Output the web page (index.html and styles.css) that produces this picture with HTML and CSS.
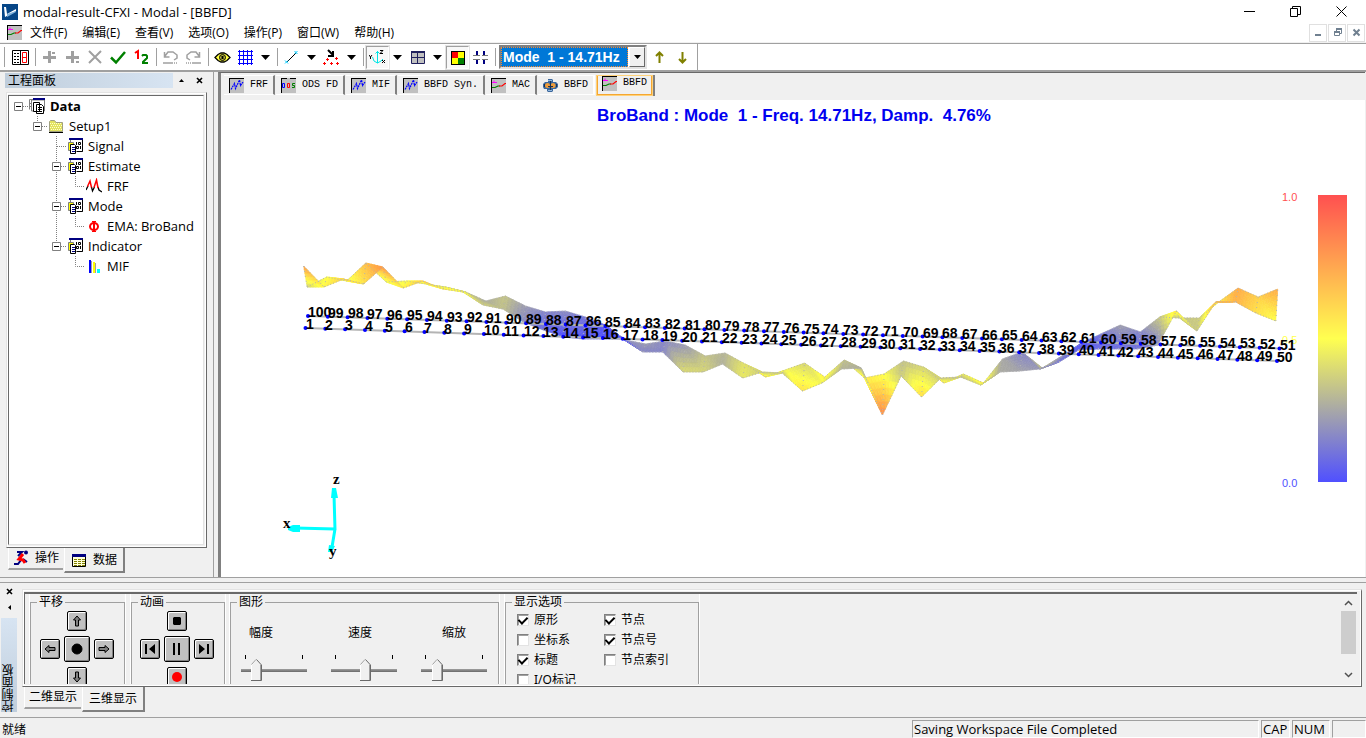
FILE: index.html
```html
<!DOCTYPE html>
<html lang="zh-CN">
<head>
<meta charset="utf-8">
<title>modal-result-CFXI - Modal - [BBFD]</title>
<link rel="stylesheet" href="styles.css">
</head>
<body>
<svg class="defs" aria-hidden="true">
  <defs>
    <symbol id="g-wave" viewBox="0 0 15 15"><path fill="#c0c0c0" d="M0 0h15v15H0z"/><path fill="none" stroke="#000" d="M0 .5h15M.5 0v15"/><path fill="none" stroke="#00f" stroke-width="1.2" stroke-dasharray="2 .7" d="M2 11.500L5.500 5.500l1 5L10.500 2l1 5.500L14 4"/></symbol>
    <symbol id="g-ods" viewBox="0 0 15 15"><path fill="#c0c0c0" d="M0 0h15v15H0z"/><path fill="none" stroke="#000" d="M0 .5h6m3 0h6M.5 0v15"/><path fill="none" stroke="#00f" d="M1.500 5.500h2v4h-2z"/><path fill="none" stroke="#f00" d="M6.500 5.500v4h2v-4z"/><path fill="none" stroke="#008000" d="M14 5.500h-2.500v2h2v2H11"/></symbol>
    <symbol id="g-mac" viewBox="0 0 15 15"><path fill="#c0c0c0" d="M0 0h15v15H0z"/><path fill="none" stroke="#000" d="M0 .5h15M.5 0v15"/><path fill="none" stroke="#f0f" d="M1 4.500h2v-2M3 4.500h3"/><path fill="none" stroke="#008000" stroke-width="1.200" d="M1 9.500h3l3-1.500h2"/><path fill="none" stroke="#f00" stroke-width="1.200" d="M8 8h3l3-2.500h1"/></symbol>
    <symbol id="g-ball" viewBox="0 0 15 15"><path fill="#3a679c" d="M5 1h4l1 1v2l3 0 2 2v3l-2 2-3 0v2l-1 1-4 0-1-1v-2l-3 0L0 9V6l2-2 3 0z"/><circle cx="4.500" cy="7.500" r="2.500" fill="#ef9b38"/><circle cx="10" cy="7.500" r="2.500" fill="#ef9b38"/><path stroke="#173258" d="M7.500 3v9M1.500 6v3M13.500 6v3M5 8.500h5"/><path stroke="#91b6dd" d="M5 2.500h4M5 12.500h4"/></symbol>
    <symbol id="g-set" viewBox="0 0 16 16"><path fill="#fff" stroke="#808080" d="M3.500 1.500h12v12h-12z"/><path fill="#000080" d="M2 0h14v2H2z"/><path fill="none" stroke="#000" d="M15.500 2v11.500H10"/><path fill="none" stroke="#000" d="M9.500 4v3M11.500 4.500h2v2h-2zM9.500 8.500h2v2h-2zM13.500 8v3"/><path fill="#ff0" stroke="#808080" d="M1.500 4.500h5v3h-3v5h-2z"/><path fill="#fff" stroke="#000" d="M3.500 6.500h4l1 1v8h-5z"/><path stroke="#000080" d="M5 9.500h3M5 11.500h3M5 13.500h3"/></symbol>
    <symbol id="g-data" viewBox="0 0 16 16"><path fill="#fff" stroke="#808080" d="M.5 11.500v-10h8"/><path fill="#fff" stroke="#808080" d="M2.500 13v-11h13v11z"/><path fill="#000080" d="M4 0h12v2H4z"/><path stroke="#808080" d="M1 5.500h2M1 8.500h2"/><path fill="#fff" stroke="#000" d="M4.500 4.500h6v9h-6zM7.500 6.500h5l2 2v7h-7z"/><path stroke="#000" d="M9 9.500h4M9 11.500h4M9 13.500h4"/></symbol>
    <symbol id="g-folder" viewBox="0 0 16 16"><path fill="#e2e260" stroke="#a0a080" d="M1.500 13.500V3.500l1-1h4l1.500 2h6.500v9z"/><path fill="none" stroke="#ffc" stroke-dasharray="1 1" d="M2 5.500h12M3 7.500h12M2 9.500h12M3 11.500h11"/><path stroke="#000" d="M1 14.500h14"/></symbol>
    <symbol id="g-frf" viewBox="0 0 16 16"><path fill="none" stroke="#000" stroke-width="1.300" d="M0 12l2-4M5.500 9l1 4 2-4M12 9l1 3 3 2"/><path fill="none" stroke="#f00" stroke-width="1.500" d="M1.500 8.500L4 3l1.500 6.500M8 9.500L10.500 2l1.500 8"/></symbol>
    <symbol id="g-phi" viewBox="0 0 16 16"><ellipse cx="8" cy="8.500" rx="4" ry="3.500" fill="none" stroke="#f00" stroke-width="2"/><path stroke="#f00" stroke-width="2" d="M8 3v11"/><path stroke="#f00" d="M6 3.500h4M6 13.500h4"/></symbol>
    <symbol id="g-mif" viewBox="0 0 16 16"><path fill="#00f" d="M3 2h2v13H3z"/><path fill="#ff0" d="M7 4h2v11H7z"/><path fill="#0ff" d="M11 11h3v4h-3z"/><path stroke="#a0a0a0" d="M5.500 3v12M9.500 5v10"/></symbol>
    <symbol id="l-box" viewBox="0 0 19 20"><path fill="none" stroke="#808080" stroke-dasharray="1 1" d="M14 10.500h5"/><path fill="#fff" stroke="#808080" d="M5.500 6.500h8v8h-8z"/><path stroke="#000" d="M7 10.500h5"/></symbol>
    <symbol id="l-v" viewBox="0 0 19 20"><path stroke="#808080" stroke-dasharray="1 1" d="M9.500 0v20"/></symbol>
    <symbol id="l-up" viewBox="0 0 19 20"><path stroke="#808080" stroke-dasharray="1 1" d="M9.500 0v6"/></symbol>
    <symbol id="l-tee" viewBox="0 0 19 20"><path fill="none" stroke="#808080" stroke-dasharray="1 1" d="M9.500 0v20M10 10.500h9"/></symbol>
    <symbol id="l-end" viewBox="0 0 19 20"><path fill="none" stroke="#808080" stroke-dasharray="1 1" d="M9.500 0v10.500h10"/></symbol>
    <symbol id="a-down" viewBox="0 0 9 5"><path d="M0 0h9L4.500 5z"/></symbol>
  </defs>
</svg>

<header class="titlebar">
  <svg class="logo" viewBox="0 0 16 16"><path fill="#064687" d="M0 0h16v16H0z"/><path fill="#fff" d="M2 3h2l1 7 9-5v2L3 13z"/><path fill="#7fb1dc" d="M5 10l9-3v1L5 13z"/></svg>
  <h1 class="caption">modal-result-CFXI - Modal - [BBFD]</h1>
  <div class="window-buttons">
    <button aria-label="最小化"><svg viewBox="0 0 11 11"><path stroke="#000" d="M0 5.500h11"/></svg></button>
    <button aria-label="还原"><svg viewBox="0 0 11 11"><path fill="none" stroke="#000" d="M.5 2.500h7v8h-7zM2.500 2.500v-2h8v8h-3"/></svg></button>
    <button aria-label="关闭"><svg viewBox="0 0 11 11"><path stroke="#000" d="M.5.500l10 10M10.500.500l-10 10"/></svg></button>
  </div>
</header>

<nav class="menubar">
  <svg class="doc-icon"><use href="#g-mac"/></svg>
  <button>文件(F)</button><button>编辑(E)</button><button>查看(V)</button><button>选项(O)</button><button>操作(P)</button><button>窗口(W)</button><button>帮助(H)</button>
  <div class="mdi-buttons">
    <button aria-label="最小化文档"><svg viewBox="0 0 9 9"><path stroke="#708090" stroke-width="2" d="M1 7h6"/></svg></button>
    <button aria-label="还原文档"><svg viewBox="0 0 9 9"><path fill="none" stroke="#708090" d="M1.500 4.500h5v3h-5zM3.500 3V1.500h5v4H7"/><path stroke="#708090" stroke-width="2" d="M1 4h6M3 1h6"/></svg></button>
    <button aria-label="关闭文档"><svg viewBox="0 0 9 9"><path stroke="#708090" stroke-width="2" d="M1.500 1.500l6 6M7.500 1.500l-6 6"/></svg></button>
  </div>
</nav>

<div class="toolbar-row">
<div class="toolbar" role="toolbar">
  <span class="grip"></span>
  <button class="tool" aria-label="报告"><svg viewBox="0 0 17 17"><path fill="#fff" stroke="#000" d="M.5 1.500h16v14H.5z"/><path stroke="#000" d="M8.500 1v15M2 4.500h2M5 4.500h2M2 7.500h2M5 7.500h2M2 10.500h2M5 10.500h2M2 13.500h2M5 13.500h2"/><path fill="none" stroke="#f00" d="M10.500 3.500h4v10h-4zM10 8.500h5"/></svg></button>
  <i class="sep"></i>
  <button class="tool" aria-label="添加"><svg viewBox="0 0 17 17"><path stroke="#a0a0a0" stroke-width="3" d="M8.500 2v12M2 8.500h13"/><path fill="#a0a0a0" d="M11 3h3v2h-3z"/></svg></button>
  <button class="tool" aria-label="插入"><svg viewBox="0 0 17 17"><path stroke="#a0a0a0" stroke-width="3" d="M8.500 2v12M2 8.500h13"/><path fill="#a0a0a0" d="M12 12h3v2h-3z"/></svg></button>
  <button class="tool" aria-label="删除"><svg viewBox="0 0 17 17"><path stroke="#a0a0a0" stroke-width="2" d="M2 2l12 12M14 2L2 14"/></svg></button>
  <button class="tool" aria-label="确认"><svg viewBox="0 0 17 17"><path fill="none" stroke="#008000" stroke-width="2.500" d="M1 8.500l5 5L15 3"/></svg></button>
  <button class="tool" aria-label="编号"><svg viewBox="0 0 17 17"><path fill="none" stroke="#f00" stroke-width="2" d="M2 4l3-2v8"/><path fill="none" stroke="#008000" stroke-width="2" d="M9 7l1-1h3l1 1v2l-4 4v1h5"/></svg></button>
  <i class="sep"></i>
  <button class="tool" aria-label="撤销"><svg viewBox="0 0 17 17"><path fill="none" stroke="#a0a0a0" stroke-width="1.500" d="M2.500 3v5h5M3 7l3-4h5l4 3v3l-3 2M1 14h9"/><path stroke="#a0a0a0" stroke-width="1.500" stroke-dasharray="1 1" d="M10 14h6"/></svg></button>
  <button class="tool" aria-label="重做"><svg viewBox="0 0 17 17"><path fill="none" stroke="#a0a0a0" stroke-width="1.500" d="M14.500 3v5h-5M14 7l-3-4H6L2 6v3l3 2M7 14h9"/><path stroke="#a0a0a0" stroke-width="1.500" stroke-dasharray="1 1" d="M1 14h6"/></svg></button>
  <i class="sep"></i>
  <button class="tool" aria-label="显示"><svg viewBox="0 0 17 17"><path fill="#ffff40" stroke="#000" stroke-width="1.300" d="M1 8.500l3-3 3-1.500h3l3 1.500 3 3-3 3-3 1.500H7l-3-1.500z"/><circle cx="8.500" cy="8.500" r="3" fill="#b8b840" stroke="#000"/><path fill="#000" d="M7.500 7h2v3h-2z"/></svg></button>
  <button class="tool" aria-label="网格"><svg viewBox="0 0 17 17"><path stroke="#00f" d="M2.500 1v15M6.500 1v15M10.500 1v15M14.500 1v15M1 2.500h15M1 6.500h15M1 10.500h15M1 14.500h15"/></svg></button>
  <button class="drop" aria-label="网格选项"><svg><use href="#a-down"/></svg></button>
  <i class="sep"></i>
  <button class="tool" aria-label="画线"><svg viewBox="0 0 17 17"><path stroke="#000" d="M4 13l9-9"/><path stroke="#0cf" d="M2 11.500l3 3M2 14.500l3-3M11.500 2l3 3M14.500 2l-3 3"/></svg></button>
  <button class="drop" aria-label="画线选项"><svg><use href="#a-down"/></svg></button>
  <button class="tool" aria-label="节点"><svg viewBox="0 0 17 17"><path fill="none" stroke="#000" stroke-width="2" d="M5 1l5 5M10 2v5H5"/><path fill="none" stroke="#f00" d="M4.500 9v3M3 10.500h3M13.500 8v3M12 9.500h3M1.500 13v3M0 14.500h3M8.500 13v3M7 14.500h3M14.500 13v3M13 14.500h3"/></svg></button>
  <button class="drop" aria-label="节点选项"><svg><use href="#a-down"/></svg></button>
  <i class="sep"></i>
  <button class="tool pressed" aria-label="坐标轴"><svg viewBox="0 0 17 17"><path fill="none" stroke="#00e5e5" d="M8.500 2v12M6.500 4.500l2-2 2 2M3.500 8l1.500 4 3.500 2 3.500-2 2-2"/><path fill="none" stroke="#000" d="M11 1.500h3l-3 3h3M0 6l1.500 2L3 6M1.500 8v2M13 11l3 3M16 11l-3 3"/></svg></button>
  <button class="drop" aria-label="坐标轴选项"><svg><use href="#a-down"/></svg></button>
  <button class="tool" aria-label="视图"><svg viewBox="0 0 17 17"><path fill="#c0c0c0" stroke="#20205c" d="M2.500 2.500h13v12h-13z"/><path fill="#20205c" d="M2 2h14v2H2z"/><path stroke="#20205c" d="M8.500 3v12M2 8.500h14"/></svg></button>
  <button class="drop" aria-label="视图选项"><svg><use href="#a-down"/></svg></button>
  <button class="tool pressed" aria-label="配色"><svg viewBox="0 0 17 17"><path d="M2 2h14v14H2z"/><path fill="#f00" d="M3 3h6v6H3z"/><path fill="#ff0" d="M9 3h6v6H9zM3 9h6v6H3z"/><path fill="#008000" d="M9 9h6v6H9z"/></svg></button>
  <button class="tool" aria-label="分割"><svg viewBox="0 0 17 17"><path stroke="#000080" stroke-width="2" d="M5 2v4M12 2v4M5 11v4M12 11v4"/><path stroke="#777" d="M1 6.500h7M10 6.500h6M1 10.500h7M10 10.500h6"/></svg></button>
  <i class="sep"></i>
  <span class="combo"><select aria-label="模态"><option>Mode&nbsp;&nbsp;1 - 14.71Hz</option></select><span class="combo-arrow"><svg viewBox="0 0 9 5"><path d="M1 0h7L4.500 4z"/></svg></span></span>
  <button class="tool" aria-label="上一阶"><svg viewBox="0 0 17 17"><path fill="none" stroke="#808000" stroke-width="2" d="M8.500 14V3M5 7l3.500-3.500L12 7"/></svg></button>
  <button class="tool" aria-label="下一阶"><svg viewBox="0 0 17 17"><path fill="none" stroke="#808000" stroke-width="2" d="M8.500 3v11M5 10l3.500 3.500L12 10"/></svg></button>
</div>
</div>

<main class="workspace">
  <aside class="project">
    <div class="dock-head">
      <h2>工程面板</h2>
      <button aria-label="折叠"><svg viewBox="0 0 7 7"><path d="M1 5h5L3.500 2z"/></svg></button>
      <button aria-label="关闭面板"><svg viewBox="0 0 7 7"><path stroke="#000" stroke-width="1.600" d="M1 1l5 5M6 1L1 6"/></svg></button>
    </div>
    <div class="frame tree-frame">
      <ul class="tree" role="tree">
        <li><svg class="cell"><use href="#l-box"/></svg><svg class="ico"><use href="#g-data"/></svg><b>Data</b></li>
        <li><i class="cell"></i><svg class="cell"><use href="#l-up"/><use href="#l-box"/></svg><svg class="ico"><use href="#g-folder"/></svg>Setup1</li>
        <li><i class="cell"></i><i class="cell"></i><svg class="cell"><use href="#l-tee"/></svg><svg class="ico"><use href="#g-set"/></svg>Signal</li>
        <li><i class="cell"></i><i class="cell"></i><svg class="cell"><use href="#l-v"/><use href="#l-box"/></svg><svg class="ico"><use href="#g-set"/></svg>Estimate</li>
        <li><i class="cell"></i><i class="cell"></i><svg class="cell"><use href="#l-v"/></svg><svg class="cell"><use href="#l-end"/></svg><svg class="ico"><use href="#g-frf"/></svg>FRF</li>
        <li><i class="cell"></i><i class="cell"></i><svg class="cell"><use href="#l-v"/><use href="#l-box"/></svg><svg class="ico"><use href="#g-set"/></svg>Mode</li>
        <li><i class="cell"></i><i class="cell"></i><svg class="cell"><use href="#l-v"/></svg><svg class="cell"><use href="#l-end"/></svg><svg class="ico"><use href="#g-phi"/></svg>EMA: BroBand</li>
        <li><i class="cell"></i><i class="cell"></i><svg class="cell"><use href="#l-up"/><use href="#l-box"/></svg><svg class="ico"><use href="#g-set"/></svg>Indicator</li>
        <li><i class="cell"></i><i class="cell"></i><i class="cell"></i><svg class="cell"><use href="#l-end"/></svg><svg class="ico"><use href="#g-mif"/></svg>MIF</li>
      </ul>
    </div>
    <div class="sheet-tabs">
      <button><svg viewBox="0 0 16 16"><path fill="none" stroke="#000080" stroke-width="2" d="M4 2h5l-4 4M1 14h4l3-4M10 9l4 3"/><path fill="none" stroke="#f00" stroke-width="3" d="M10 4L6 9l4 1 2 3"/><circle cx="13" cy="2.500" r="2" fill="#000080"/></svg>操作</button>
      <button class="active"><svg viewBox="0 0 16 16"><path fill="#ffffd8" stroke="#000" d="M1.500 2.500h13v12h-13z"/><path fill="#000080" d="M1 2h14v3H1z"/><path stroke="#808000" stroke-dasharray="3 1" d="M3 7.500h11M3 9.500h11M3 11.500h11M3 13.500h11"/></svg>数据</button>
    </div>
  </aside>

  <section class="document">
    <div class="view-tabs" role="tablist">
      <button role="tab"><svg><use href="#g-wave"/></svg>FRF</button>
      <button role="tab"><svg><use href="#g-ods"/></svg>ODS FD</button>
      <button role="tab"><svg><use href="#g-wave"/></svg>MIF</button>
      <button role="tab"><svg><use href="#g-wave"/></svg>BBFD Syn.</button>
      <button role="tab"><svg><use href="#g-mac"/></svg>MAC</button>
      <button role="tab" class="plain"><svg><use href="#g-ball"/></svg>BBFD</button>
      <button role="tab" class="active"><svg><use href="#g-mac"/></svg>BBFD</button>
    </div>
    <svg class="plot" viewBox="221 100 1144 477" preserveAspectRatio="xMinYMin meet">
      <defs><linearGradient id="scale" x1="0" y1="0" x2="0" y2="1"><stop offset="0" stop-color="#ff5050"/><stop offset=".5" stop-color="#ffff50"/><stop offset="1" stop-color="#5050ff"/></linearGradient></defs>
      <text class="plot-title" x="597" y="121">BroBand : Mode&#160; 1 - Freq. 14.71Hz, Damp.&#160; 4.76%</text>
      <g id="surface"></g>
      <text class="scale-label" x="1282" y="344" fill="#ffff50">0.5</text>
      <g id="nodes"></g>
      <rect x="1318" y="195" width="29" height="287" fill="url(#scale)"/>
      <text class="scale-label" x="1282" y="201" fill="#ff5050">1.0</text>
      <text class="scale-label" x="1282" y="487" fill="#5050ff">0.0</text>
      <g stroke="#0ff" stroke-width="3" fill="#0ff"><path d="M335 530l-1-36M335 529l-40-1M335 529l-3 18"/><path stroke="none" d="M332 488h4l2 10h-7zM288 527l5-2 7 0v7l-7 0-5-2zM329 545l6 1-3 6h-4z"/></g>
      <text class="axis" x="333" y="484">z</text><text class="axis" x="283" y="528">x</text><text class="axis" x="329" y="556">y</text>
    </svg>
  </section>
</main>

<section class="control">
  <div class="control-side">
    <button aria-label="关闭控制面板"><svg viewBox="0 0 7 7"><path stroke="#000" stroke-width="1.600" d="M1 1l5 5M6 1L1 6"/></svg></button>
    <button aria-label="折叠控制面板"><svg viewBox="0 0 7 7"><path d="M5 1v5L2 3.500z"/></svg></button>
    <h2>控制面板</h2>
  </div>
  <div class="control-body">
    <div class="frame control-frame">
      <div class="groups">
        <fieldset class="g-pan"><legend>平移</legend>
          <div class="pad">
            <button class="up" aria-label="上移"><svg viewBox="0 0 12 12"><path d="M6 1l3.500 4H7.500v6h-3V5h-2z"/></svg></button>
            <button class="left" aria-label="左移"><svg viewBox="0 0 12 12"><path d="M1 6l4-3.500v2h6v3H5v2z"/></svg></button>
            <button class="mid" aria-label="居中"><svg viewBox="0 0 12 12"><circle cx="6" cy="6" r="5" fill="#000"/></svg></button>
            <button class="right" aria-label="右移"><svg viewBox="0 0 12 12"><path d="M11 6L7 2.500v2H1v3h6v2z"/></svg></button>
            <button class="down" aria-label="下移"><svg viewBox="0 0 12 12"><path d="M6 11L2.500 7h2V1h3v6h2z"/></svg></button>
          </div>
        </fieldset>
        <fieldset class="g-anim"><legend>动画</legend>
          <div class="pad">
            <button class="up" aria-label="停止"><svg viewBox="0 0 12 12"><path fill="#000" d="M3 2h6l1 1v6l-1 1H3L2 9V3z"/></svg></button>
            <button class="left" aria-label="上一帧"><svg viewBox="0 0 12 12"><path fill="#000" d="M1 1h2v10H1zM11 1v10L5 6z"/></svg></button>
            <button class="mid" aria-label="暂停"><svg viewBox="0 0 12 12"><path fill="#000" d="M2 0h2v12H2zM7 0h2v12H7z"/></svg></button>
            <button class="right" aria-label="下一帧"><svg viewBox="0 0 12 12"><path fill="#000" d="M9 1h2v10H9zM1 1v10l6-5z"/></svg></button>
            <button class="down" aria-label="录制"><svg viewBox="0 0 12 12"><circle cx="6" cy="6" r="5" fill="#f00"/></svg></button>
          </div>
        </fieldset>
        <fieldset class="g-shape"><legend>图形</legend>
          <div class="sliders">
            <label class="s-amp"><span>幅度</span><i class="ticks"></i><input type="range" value="19"></label>
            <label class="s-speed"><span>速度</span><i class="ticks"></i><input type="range" value="53"></label>
            <label class="s-zoom"><span>缩放</span><i class="ticks"></i><input type="range" value="20"></label>
          </div>
        </fieldset>
        <fieldset class="g-show"><legend>显示选项</legend>
          <div class="checks">
            <label><input type="checkbox" checked>原形</label><label><input type="checkbox" checked>节点</label>
            <label><input type="checkbox">坐标系</label><label><input type="checkbox" checked>节点号</label>
            <label><input type="checkbox" checked>标题</label><label><input type="checkbox">节点索引</label>
            <label><input type="checkbox">I/O标记</label>
          </div>
        </fieldset>
      </div>
      <div class="scrollbar">
        <button aria-label="向上滚动"><svg viewBox="0 0 9 6"><path fill="none" stroke="#505050" stroke-width="1.500" d="M1 5l3.500-3.500L8 5"/></svg></button>
        <span class="thumb"></span>
        <button aria-label="向下滚动"><svg viewBox="0 0 9 6"><path fill="none" stroke="#505050" stroke-width="1.500" d="M1 1l3.500 3.500L8 1"/></svg></button>
      </div>
    </div>
    <div class="sheet-tabs">
      <button>二维显示</button>
      <button class="active">三维显示</button>
    </div>
  </div>
</section>

<footer class="statusbar">
  <span class="ready">就绪</span>
  <span class="pane message">Saving Workspace File Completed</span>
  <span class="pane cap">CAP</span>
  <span class="pane num">NUM</span>
  <span class="pane blank"></span>
</footer>
<script src="plot.js"></script>
</body>
</html>
```
FILE: styles.css
```css
* { box-sizing: border-box; }
body {
  margin: 0;
  height: 100vh;
  display: flex;
  flex-direction: column;
  overflow: hidden;
  background: #f0f0f0;
  color: #000;
  font: 12px/16px "Noto Sans", "Noto Sans CJK SC", sans-serif;
}
button {
  display: flex;
  align-items: center;
  justify-content: center;
  margin: 0;
  padding: 0;
  border: 0;
  background: none;
  color: inherit;
  font: inherit;
  white-space: nowrap;
}
h1, h2 { margin: 0; font-size: 12px; font-weight: 400; }
svg { display: block; flex: none; }
.defs { position: absolute; width: 0; height: 0; }

.titlebar { display: flex; align-items: center; height: 23px; padding-left: 2px; background: #fff; flex: none; }
.logo { width: 16px; height: 16px; }
.caption { flex: 1; padding-left: 5px; font: 13px/20px "Open Sans", "Noto Sans CJK SC", sans-serif; }
.window-buttons { display: flex; padding-right: 2px; }
.window-buttons button { width: 46px; height: 21px; }
.window-buttons svg { width: 11px; height: 11px; }

.menubar { display: flex; align-items: center; gap: 15px; height: 19px; padding-left: 7px; background: #fff; flex: none; font-family: "Open Sans", "Noto Sans CJK SC", sans-serif; }
.doc-icon { width: 15px; height: 15px; margin-right: -7px; }
.mdi-buttons { display: flex; gap: 1px; margin-left: auto; padding-right: 1px; }
.mdi-buttons button { width: 18px; height: 18px; border: 1px solid #e0e0e0; }
.mdi-buttons svg { width: 9px; height: 9px; }

.toolbar-row { background: #fff; border-top: 1px solid #a0a0a0; border-bottom: 2px solid #a0a0a0; flex: none; margin-top: 1px; }
.toolbar { display: flex; align-items: center; width: max-content; height: 26px; padding-right: 3px; border-right: 1px solid #a0a0a0; }
.grip { width: 2px; height: 20px; margin: 0 4px 0 3px; border-right: 1px solid #a0a0a0; }
.tool { width: 23px; height: 23px; }
.tool svg { width: 17px; height: 17px; }
.tool.pressed { border: 1px solid #fff; border-top-color: #a0a0a0; border-left-color: #a0a0a0; outline: 1px solid #e3e3e3; background: #f8f8f8; }
.drop { width: 17px; height: 23px; }
.drop svg { width: 9px; height: 5px; }
.sep { width: 1px; height: 18px; margin: 0 2px 0 3px; background: #a0a0a0; }
.combo { display: flex; width: 148px; height: 24px; margin: 0 1px; border: 2px solid; border-color: #808080 #e3e3e3 #e3e3e3 #808080; background: #fff; }
.combo select { flex: 1; min-width: 0; margin: 0 1px 0 0; padding: 0 0 0 1px; appearance: none; border: 1px dotted #ff8728; border-radius: 0; background: #0078d7; color: #fff; font: bold 14px/18px "Liberation Sans", Arial, sans-serif; }
.combo-arrow { display: flex; align-items: center; justify-content: center; width: 16px; border: 1px solid; border-color: #fff #696969 #696969 #fff; background: #f0f0f0; }
.combo-arrow svg { width: 9px; height: 5px; }

.workspace { display: flex; flex: 1; min-height: 0; border-bottom: 1px solid #a0a0a0; }
.project { display: flex; flex-direction: column; width: 214px; padding: 1px 6px 4px 5px; border-right: 1px solid #a0a0a0; flex: none; }
.dock-head { display: flex; align-items: center; height: 19px; padding-bottom: 4px; }
.dock-head h2 { flex: 1; padding-left: 3px; line-height: 15px; background: linear-gradient(90deg, #bfcddb, #d7e4f2); }
.dock-head button { width: 17px; height: 15px; }
.dock-head button + button { padding-left: 1px; }
.dock-head svg, .control-side svg { width: 7px; height: 7px; }
.frame { border: 2px solid; border-color: #e3e3e3 #696969 #696969 #e3e3e3; outline: 1px solid #fff; outline-offset: -2px; }
.tree-frame { flex: 1; display: flex; margin-left: 1px; padding: 1px 1px 1px 0; }
.tree { flex: 1; margin: 0; padding: 0; list-style: none; background: #fff; border: 1px solid; border-color: #696969 #e3e3e3 #e3e3e3 #696969; font: 13px/20px "Open Sans", sans-serif; }
.tree li { display: flex; align-items: center; height: 20px; }
.tree b { font-weight: 700; }
.cell { width: 19px; height: 20px; flex: none; }
.ico { width: 16px; height: 16px; margin: 0 5px 0 1px; }

.sheet-tabs { display: flex; align-items: flex-start; height: 25px; padding-left: 2px; gap: 1px; }
.sheet-tabs button { height: 22px; padding: 0 4px; gap: 6px; border: solid; border-width: 0 0 2px 1px; border-color: #fff #fff #a0a0a0 #fff; }
.sheet-tabs .active { height: 25px; padding: 0 6px; border-width: 0 2px 2px 1px; border-color: #fff #808080 #808080 #fff; }
.sheet-tabs svg { width: 16px; height: 16px; }
.project .sheet-tabs { padding-left: 3px; }

.document { flex: 1; min-width: 0; display: flex; flex-direction: column; margin: 0 1px 0 4px; border-left: 3px solid #808080; border-top: 1px solid #696969; background: #fff; }
.view-tabs { display: flex; align-items: flex-start; gap: 1px; height: 27px; padding: 2px 0 0 3px; background: #f0f0f0; font: 10px/18px "Liberation Mono", monospace; flex: none; }
.view-tabs button { height: 20px; padding: 0 5px; gap: 6px; border-right: 2px solid #808080; border-bottom: 1px solid #fff; border-top: 1px solid #fff; }
.view-tabs svg { width: 15px; height: 15px; }
.view-tabs .plain { border-right-color: #fff; }
.view-tabs .active { height: 21px; padding: 0 4px 3px; border: 2px solid #f5a732; border-top: 0; outline: 1px solid #ffd27a; outline-offset: -1px; box-shadow: 2px 0 #808080; }
.plot { width: 100%; height: auto; min-height: 0; font-family: "Liberation Sans", Arial, sans-serif; }
.plot-title { font-size: 17px; font-weight: 700; fill: #0000f0; }
.scale-label { font-size: 11px; }
.axis { font: bold 15px "Liberation Serif", serif; }
.node-label { font-size: 14px; font-weight: 700; }

.control { display: flex; margin-top: 4px; border-top: 1px solid #a0a0a0; flex: none; height: 135px; }
.control-side { display: flex; flex-direction: column; width: 17px; padding: 0 0 5px 1px; flex: none; }
.control-side button { width: 16px; height: 16px; }
.control-side h2 { flex: 1; margin-top: 3px; writing-mode: vertical-rl; transform: rotate(180deg); background: linear-gradient(0deg, #d7e4f2, #bfcddb); }
.control-body { flex: 1; min-width: 0; display: flex; flex-direction: column; padding: 6px 4px 0 5px; }
.control-frame { display: flex; height: 98px; padding: 1px 4px 1px 0; border-width: 2px 1px 2px 2px; }
.groups { flex: 1; display: flex; align-items: flex-start; padding: 0 0 0 5px; overflow: hidden; border-top: 2px solid #696969; border-left: 1px solid #696969; }
fieldset { height: 104px; min-width: 0; margin: 0; padding: 0; border: 1px solid #a0a0a0; outline: 1px solid #fff; flex: none; }
legend { margin-left: 6px; padding: 0 2px; background: #f0f0f0; position: relative; z-index: 1; }
.g-pan { width: 95px; margin-right: 6px; }
.g-anim { width: 94px; margin-right: 5px; }
.g-shape { width: 269px; margin-right: 6px; }
.g-show { width: 194px; }
.pad { display: grid; grid-template: 20px 26px 20px / 20px 26px 20px; grid-template-areas: ". u ." "l m r" ". d ."; gap: 5px 4px; padding: 1px 2px 0 0; align-items: center; justify-items: center; justify-content: center; }
.pad button { width: 20px; height: 20px; border: 1px solid #000; border-radius: 2px; background: #c0c0c0; box-shadow: inset 1px 1px #fff, inset -1px -1px #808080; }
.pad svg { width: 12px; height: 12px; fill: #808080; stroke: #000; stroke-width: 1; }
.pad .mid { width: 26px; height: 26px; grid-area: m; }
.pad .up { grid-area: u; }
.pad .left { grid-area: l; }
.pad .right { grid-area: r; }
.pad .down { grid-area: d; }
.g-anim .pad svg { stroke: none; }
.sliders { display: flex; gap: 24px; padding: 15px 10px; }
.sliders label { display: flex; flex-direction: column; width: 66px; }
.s-amp span { padding-left: 8px; }
.s-speed span { padding-left: 17px; }
.s-zoom span { padding-left: 21px; }
.ticks { height: 4px; margin: 14px 4px 0; border: solid #000; border-width: 0 1px; }
.sliders input { width: 66px; height: 22px; margin: 0; appearance: none; background: linear-gradient(#a0a0a0, #696969) center / 100% 3px no-repeat; }
.sliders input::-webkit-slider-thumb { appearance: none; width: 11px; height: 22px; background: url("data:image/svg+xml,%3Csvg xmlns='http://www.w3.org/2000/svg' viewBox='0 0 11 22'%3E%3Cpath fill='%23f0f0f0' d='M0 6l5-6 5.500 6v15.500H0z'/%3E%3Cpath fill='none' stroke='%23fff' d='M.5 21V6L5.500.500'/%3E%3Cpath fill='none' stroke='%23a0a0a0' d='M5 .500l-4.500 5M9.500 6v15'/%3E%3Cpath fill='none' stroke='%23696969' d='M5.500.500l5 5.500v15.500H0'/%3E%3C/svg%3E"); }
.checks { display: grid; grid-template-columns: 87px 87px; grid-auto-rows: 20px; padding-left: 11px; }
.checks label { display: flex; align-items: center; gap: 5px; white-space: nowrap; }
.checks input { appearance: none; width: 12px; height: 12px; margin: 0; background: #fff; border: 1px solid; border-color: #808080 #e3e3e3 #e3e3e3 #808080; box-shadow: inset 1px 1px #a0a0a0; display: grid; place-items: center; }
.checks input:checked::after { content: ""; width: 4px; height: 7px; margin-top: -2px; border: solid #000; border-width: 0 2px 2px 0; transform: rotate(45deg); }
.scrollbar { display: flex; flex-direction: column; width: 17px; padding: 1px; border-top: 2px solid #696969; }
.scrollbar button { width: 15px; height: 16px; flex: none; }
.scrollbar svg { width: 9px; height: 6px; }
.thumb { flex: none; height: 43px; margin-bottom: auto; background: #cdcdcd; }

.statusbar { display: flex; height: 21px; padding-top: 2px; border-top: 1px solid #a0a0a0; flex: none; gap: 2px; font-family: "Open Sans", "Noto Sans CJK SC", sans-serif; line-height: 17px; }
.ready { flex: 1; padding-left: 2px; line-height: 20px; }
.pane { border: 1px solid; border-color: #a0a0a0 #fff #fff #a0a0a0; padding-left: 1px; font-size: 13px; }
.message { width: 347px; }
.cap { width: 29px; }
.num { width: 38px; }
.blank { width: 34px; }
```
FILE: plot.js
```js
const NS = "http://www.w3.org/2000/svg";
const surface = document.getElementById("surface");
const nodes = document.getElementById("nodes");

function add(parent, tag, attrs, text) {
  const el = document.createElementNS(NS, tag);
  for (const key in attrs) el.setAttribute(key, attrs[key]);
  if (text !== undefined) el.textContent = text;
  parent.appendChild(el);
}

/* Deflected heights of the two edges of the beam, one per station. */
const front = [266, 287, 279, 284, 267, 288, 281, 289, 292, 305, 309, 322, 330, 337, 339, 339, 339,
  352, 352, 372, 372, 364, 378, 372, 373, 391, 383, 369, 368, 415, 376, 397, 378,
  377, 385, 372, 371, 369, 362, 350, 349, 349, 349, 345, 311, 331, 302, 302, 313, 321];
const back = [287, 277, 281, 263, 282, 281, 284, 287, 292, 301, 296, 306, 312, 311, 317, 325, 340,
  344, 341, 345, 356, 353, 364, 377, 370, 363, 377, 360, 378, 374, 361, 367, 383,
  374, 383, 359, 352, 368, 356, 343, 334, 325, 332, 317, 318, 318, 302, 288, 297, 289];

const count = front.length;
const step = 971.5 / (count - 1);
const restFront = i => 328 + i * 33 / (count - 1);
const restBack = i => 316 + i * 32.5 / (count - 1);
const mix = (a, b, t) => a + (b - a) * t;

function shade(v) {
  v = Math.min(1, Math.max(0, v));
  const c = v < 0.5
    ? [mix(80, 255, v * 2), mix(80, 255, v * 2), mix(255, 72, v * 2)]
    : [255, mix(255, 80, v * 2 - 1), 72];
  return "rgb(" + c.map(Math.round).join(",") + ")";
}

function vertex(x, rest, y) {
  return { x: x + (y - rest) * 0.03, y, v: Math.abs(y - rest) / 80 };
}
const f = front.map((y, i) => vertex(305.5 + i * step, restFront(i), y));
const b = back.map((y, i) => vertex(308 + i * step, restBack(i), y));

/* Gouraud-like fill: the triangle is cut into N*N small ones of one colour each. */
const N = 6;
function triangle(p, q, r) {
  const at = (i, j) => {
    const s = i / N, t = j / N, u = 1 - s - t;
    return { x: u * p.x + s * q.x + t * r.x, y: u * p.y + s * q.y + t * r.y, v: u * p.v + s * q.v + t * r.v };
  };
  const cell = pts => {
    const color = shade((pts[0].v + pts[1].v + pts[2].v) / 3);
    add(surface, "polygon", {
      points: pts.map(m => m.x.toFixed(2) + "," + m.y.toFixed(2)).join(" "),
      fill: color, stroke: color, "stroke-width": 0.6, "stroke-linejoin": "round"
    });
  };
  for (let i = 0; i < N; i++) {
    for (let j = 0; j < N - i; j++) {
      cell([at(i, j), at(i + 1, j), at(i, j + 1)]);
      if (i + j < N - 1) cell([at(i + 1, j), at(i + 1, j + 1), at(i, j + 1)]);
    }
  }
}
for (let i = 0; i < count - 1; i++) {
  triangle(b[i], b[i + 1], f[i + 1]);
  triangle(b[i], f[i + 1], f[i]);
}

for (const row of [f, b]) {
  const points = row.map(p => p.x.toFixed(1) + "," + p.y).join(" ");
  add(surface, "polyline", { points, fill: "none", stroke: "#b4b4b4", "stroke-width": 1, "stroke-dasharray": "1 2" });
}
for (let i = 0; i < count; i++) {
  add(surface, "line", { x1: f[i].x, y1: f[i].y, x2: b[i].x, y2: b[i].y, stroke: "#b4b4b4", "stroke-width": 1, "stroke-dasharray": "1 4" });
}

add(nodes, "line", { x1: 305, y1: 328, x2: 1277, y2: 361, stroke: "#b4b4b4", "stroke-width": 2 });
add(nodes, "line", { x1: 308, y1: 316, x2: 1279, y2: 348.5, stroke: "#b4b4b4", "stroke-width": 2 });
for (let i = 0; i < count; i++) {
  for (const [x, y, name] of [[308 + i * step, restBack(i), 100 - i], [305.5 + i * step, restFront(i), i + 1]]) {
    add(nodes, "circle", { cx: x, cy: y, r: 2, fill: "#00f" });
    add(nodes, "text", { class: "node-label", x: Math.round(x), y: Math.round(y) + 1 }, name);
  }
}
```
